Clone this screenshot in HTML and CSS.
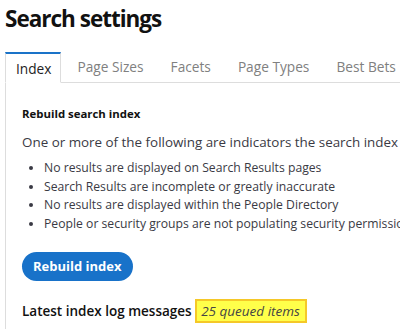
FILE: index.html
```
<html>
	<head>
		<link rel="stylesheet" href="styles.css">
	</head>
	<body>
		<h1 class="title">Search settings</h1>
		<div class="tabs">
			<div class="tab active">Index</div>
			<div class="tab">Page Sizes</div>
			<div class="tab">Facets</div>
			<div class="tab">Page Types</div>
			<div class="tab">Best Bets</div>
			<div class="tabFill"></div>
		</div>
		<div class="panel">
			<h2 class="sectionTitle">Rebuild search index</h2>
			<p class="intro">One or more of the following are indicators the search index needs to be rebuilt:</p>
			<ul class="reasons">
				<li>No results are displayed on Search Results pages</li>
				<li>Search Results are incomplete or greatly inaccurate</li>
				<li>No results are displayed within the People Directory</li>
				<li>People or security groups are not populating security permissions</li>
			</ul>
			<button class="rebuildButton">Rebuild index</button>
			<p class="logLine"><span class="logLabel">Latest index log messages</span> <span class="queued">25 queued items</span></p>
		</div>
	</body>
</html>
```
FILE: styles.css
```
body{ margin: 0; padding: 0 5px; background: white; color: #333333; font-family: "Open Sans", sans-serif; overflow: hidden; width: 700px; }
.title{ font-size: 22.5px; font-weight: bold; color: #111111; margin: 3px 0 0 0; line-height: 32px; letter-spacing: -1px; }
.tabs{ display: flex; margin-top: 17px; height: 31px; }
.tab{ padding: 0 13.5px; line-height: 30px; font-size: 13.7px; color: #808080; border-bottom: 1px solid #dddddd; }
.tab.active{ padding: 0 9px 0 10px; color: #222222; border-top: 2px solid #1a73c8; border-left: 1px solid #dddddd; border-right: 1px solid #dddddd; border-bottom: 1px solid transparent; line-height: 29px; }
.tab.active + .tab{ padding-left: 16px; }
.tabFill{ flex: 1; border-bottom: 1px solid #dddddd; }
.panel{ border-left: 1px solid #dddddd; padding: 22px 16px 10px 16px; }
.sectionTitle{ font-size: 11.4px; font-weight: bold; color: #111111; margin: 0; line-height: 18px; }
.intro{ font-size: 13.4px; margin: 10px 0 0 0; white-space: nowrap; line-height: 18px; color: #3a3a44; }
.reasons{ margin: 8px 0 0 0; padding-left: 22px; font-size: 12.2px; line-height: 18.7px; white-space: nowrap; color: #3a3a44; }
.rebuildButton{ margin-top: 18px; background: #1872c9; color: white; border: none; border-radius: 15px; height: 29px; padding: 0 11px; font-family: "Open Sans", sans-serif; font-weight: bold; font-size: 13px; }
.logLine{ margin: 19px 0 0 0; font-size: 13.5px; line-height: 22px; color: #111111; }
.logLabel{ font-weight: 600; }
.queued{ background: #ffff4a; border: 2px solid #f5c828; font-style: italic; padding: 1px 5px 1px 4px; color: #444444; }
```
